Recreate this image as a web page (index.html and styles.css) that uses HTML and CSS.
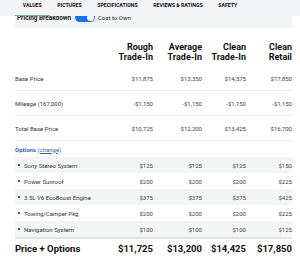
FILE: index.html
```html
<!DOCTYPE html>
<html lang="en">
<head>
<meta charset="utf-8">
<title>Pricing Breakdown</title>
<link rel="stylesheet" href="styles.css">
</head>
<body>
<nav class="tabs">
  <a class="tab active">VALUES</a>
  <a class="tab">PICTURES</a>
  <a class="tab">SPECIFICATIONS</a>
  <a class="tab">REVIEWS &amp; RATINGS</a>
  <a class="tab">SAFETY</a>
</nav>
<main class="page">
  <div class="switchbar">
    <span class="sw-label">Pricing Breakdown</span>
    <span class="toggle"><span class="knob"></span></span>
    <span class="sw-label2">Cost to Own</span>
  </div>
  <div class="table">
    <div class="row head">
      <div></div>
      <div class="num">Rough<br>Trade-In</div>
      <div class="num">Average<br>Trade-In</div>
      <div class="num">Clean<br>Trade-In</div>
      <div class="num">Clean<br>Retail</div>
    </div>
    <div class="row main">
      <div class="label">Base Price</div>
      <div class="num">$11,875</div><div class="num">$13,350</div><div class="num">$14,575</div><div class="num">$17,850</div>
    </div>
    <div class="row main">
      <div class="label">Mileage (167,000)</div>
      <div class="num">-$1,150</div><div class="num">-$1,150</div><div class="num">-$1,150</div><div class="num">-$1,150</div>
    </div>
    <div class="row main">
      <div class="label">Total Base Price</div>
      <div class="num">$10,725</div><div class="num">$12,200</div><div class="num">$13,425</div><div class="num">$16,700</div>
    </div>
    <div class="row options-head">
      <div class="label"><span class="opt-title">Options</span> <a class="change">(change)</a></div>
    </div>
    <div class="row opt">
      <div class="label bullet">Sony Stereo System</div>
      <div class="num">$125</div><div class="num">$125</div><div class="num">$125</div><div class="num">$150</div>
    </div>
    <div class="row opt">
      <div class="label bullet">Power Sunroof</div>
      <div class="num">$200</div><div class="num">$200</div><div class="num">$200</div><div class="num">$225</div>
    </div>
    <div class="row opt">
      <div class="label bullet">3.5L V6 EcoBoost Engine</div>
      <div class="num">$375</div><div class="num">$375</div><div class="num">$375</div><div class="num">$425</div>
    </div>
    <div class="row opt">
      <div class="label bullet">Towing/Camper Pkg</div>
      <div class="num">$200</div><div class="num">$200</div><div class="num">$200</div><div class="num">$225</div>
    </div>
    <div class="row opt last">
      <div class="label bullet">Navigation System</div>
      <div class="num">$100</div><div class="num">$100</div><div class="num">$100</div><div class="num">$125</div>
    </div>
    <div class="row total">
      <div class="label">Price + Options</div>
      <div class="num">$11,725</div><div class="num">$13,200</div><div class="num">$14,425</div><div class="num">$17,850</div>
    </div>
  </div>
</main>
</body>
</html>
```
FILE: styles.css
```css
* { box-sizing: border-box; margin: 0; padding: 0; }
html, body { background: #fff; }
body {
  width: 300px;
  height: 260px;
  overflow: hidden;
  font-family: Roboto, "Liberation Sans", sans-serif;
  color: #333;
}
.tabs {
  position: fixed;
  top: 0; left: 0; right: 0;
  height: 16px;
  background: #f3f4f6;
  display: flex;
  padding-left: 15px;
  z-index: 2;
}
.tab {
  font-size: 5.2px;
  font-weight: 700;
  color: #111;
  padding: 0 7.8px;
  line-height: 10px;
  height: 16px;
}
.tab.active { box-shadow: inset 0 -1px 0 #f0892b; }

.page { padding: 0 8px 0 15px; }
.switchbar {
  height: 28px;
  background: #f3f4f6;
  display: flex;
  align-items: center;
  padding: 7px 0 0 2px;
}
.sw-label { font-size: 6.4px; font-weight: 700; color: #222; }
.toggle {
  width: 20px; height: 9px;
  border-radius: 5px;
  background: #1f6fe5;
  margin-left: 4px;
  position: relative;
}
.knob {
  position: absolute;
  right: 1px; top: 1px;
  width: 7px; height: 7px;
  border-radius: 50%;
  background: #fff;
}
.sw-label2 { font-size: 6px; color: #222; margin-left: 3px; }

.row {
  display: grid;
  grid-template-columns: 1fr 43px 49px 44px 46px;
  align-items: center;
}
.num { text-align: right; font-size: 6px; color: #444; }
.label { font-size: 6px; color: #333; }
.head { padding: 14px 0 4px; }
.head .num { font-size: 9px; line-height: 10px; font-weight: 700; color: #111; }
.main { height: 25px; border-bottom: 1px solid #e7e9ec; }
.options-head { height: 16px; }
.opt-title { font-weight: 700; color: #1c63d6; }
.change { color: #1c63d6; text-decoration: underline; }
.opt { height: 16px; }
.opt:nth-child(even) { background: #f4f5f7; }
.opt.last { border-bottom: 2px solid #e2e4e7; height: 18px; }
.bullet { display: flex; align-items: center; padding-left: 3px; }
.bullet::before {
  content: "";
  width: 2px; height: 2px;
  background: #1c63d6;
  margin-right: 4px;
}
.total { height: 18px; }
.total .label, .total .num { font-size: 9.5px; font-weight: 700; color: #111; }
```
